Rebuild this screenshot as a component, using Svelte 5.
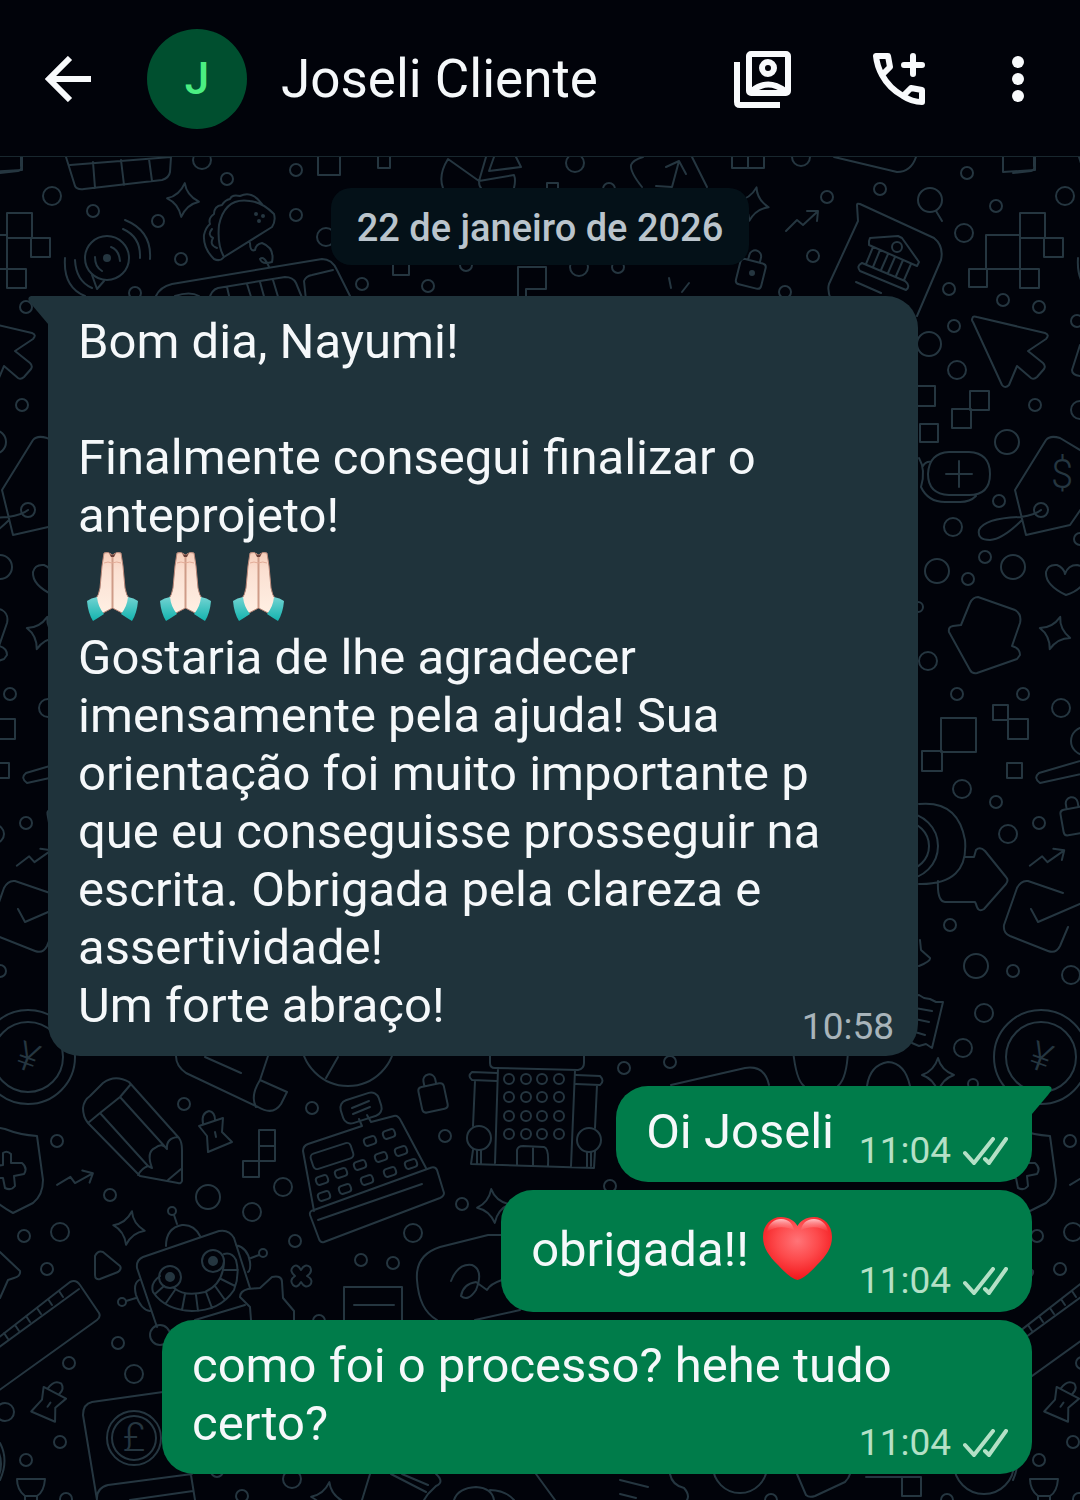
<script lang="ts">
  type Part = { text?: string; emoji?: 'pray' | 'heart' };
  interface Message {
    id: number;
    sent: boolean;
    tail: boolean;
    time: string;
    lines: Part[][];
  }

  const contact = 'Joseli Cliente';
  const day = '22 de janeiro de 2026';

  const messages: Message[] = [
    {
      id: 1,
      sent: false,
      tail: true,
      time: '10:58',
      lines: [
        [{ text: 'Bom dia, Nayumi!' }],
        [],
        [{ text: 'Finalmente consegui finalizar o anteprojeto!' }],
        [{ emoji: 'pray' }, { emoji: 'pray' }, { emoji: 'pray' }],
        [
          {
            text: 'Gostaria de lhe agradecer imensamente pela ajuda! Sua orientação foi muito importante p que eu conseguisse prosseguir na escrita. Obrigada pela clareza e assertividade!'
          }
        ],
        [{ text: 'Um forte abraço!' }]
      ]
    },
    { id: 2, sent: true, tail: true, time: '11:04', lines: [[{ text: 'Oi Joseli' }]] },
    { id: 3, sent: true, tail: false, time: '11:04', lines: [[{ text: 'obrigada!! ' }, { emoji: 'heart' }]] },
    { id: 4, sent: true, tail: false, time: '11:04', lines: [[{ text: 'como foi o processo? hehe tudo certo?' }]] }
  ];

  // wallpaper: x, y, r
  const rings = [
    [52, 196, 9], [93, 211, 6], [158, 221, 6], [227, 179, 6], [202, 160, 9], [296, 170, 6], [296, 215, 6],
    [181, 259, 6], [135, 293, 6], [326, 237, 9], [362, 284, 6], [428, 286, 6], [466, 265, 6], [579, 267, 9],
    [618, 267, 6], [575, 163, 9], [609, 189, 6], [801, 157, 9], [827, 197, 6], [880, 189, 6], [930, 200, 12],
    [967, 173, 6], [996, 206, 6], [964, 233, 9], [813, 256, 6], [949, 289, 6], [785, 292, 6],
    [1003, 300, 6], [897, 247, 5], [1039, 307, 6], [1077, 321, 6], [954, 326, 6], [929, 344, 12], [957, 370, 9],
    [1035, 405, 6], [1007, 442, 12], [1080, 410, 9], [999, 501, 6], [953, 527, 9], [985, 557, 6], [937, 571, 12],
    [1013, 567, 12], [968, 579, 6], [1080, 539, 6], [918, 607, 5], [928, 661, 9], [957, 694, 6], [1023, 694, 6],
    [1041, 510, 7], [1061, 708, 9], [962, 789, 9], [996, 802, 6], [1008, 834, 9], [1039, 823, 6], [950, 925, 6],
    [976, 966, 12], [1013, 971, 6], [1071, 975, 9], [984, 1013, 9], [963, 1048, 9], [973, 1084, 5],
    [1041, 1057, 47], [1041, 1057, 35], [905, 846, 33], [905, 846, 24], [1085, 741, 14],
    [184, 1104, 6], [57, 1141, 6], [110, 1195, 6], [60, 1232, 9], [24, 1236, 6], [47, 1269, 6], [208, 1197, 12],
    [252, 1212, 9], [283, 1187, 9], [312, 1108, 6], [295, 1241, 6], [118, 1343, 6], [69, 1363, 6], [134, 1374, 9],
    [5, 1412, 9], [60, 1442, 6], [26, 1460, 6], [292, 1479, 9], [242, 1496, 6], [66, 1499, 6], [217, 1471, 6],
    [319, 1321, 6], [348, 1039, 47], [445, 1136, 6], [462, 1204, 6], [413, 1233, 9], [361, 1260, 6], [393, 1263, 6],
    [624, 1068, 6], [610, 1186, 6], [670, 1062, 6], [479, 1138, 12], [589, 1140, 12], [740, 1466, 27],
    [984, 1464, 30], [771, 1500, 6], [947, 1500, 6], [172, 1211, 4], [263, 1253, 4], [122, 1302, 4],
    [170, 1277, 11], [213, 1261, 11], [160, 1335, 10], [134, 1438, 27], [134, 1438, 22], [107, 258, 22]
  ];

  // x, y, width, height
  const boxes = [
    [318, 140, 22, 35], [378, 140, 12, 28], [547, 183, 11, 12], [393, 258, 16, 17], [732, 140, 16, 28],
    [748, 140, 16, 28], [1020, 213, 25, 25], [1044, 238, 19, 19], [986, 235, 34, 34], [969, 269, 18, 18],
    [1020, 269, 19, 19], [915, 386, 20, 20], [920, 424, 18, 18], [970, 391, 19, 19], [952, 409, 19, 19],
    [941, 718, 35, 34], [922, 751, 20, 20], [993, 705, 15, 15], [1008, 719, 20, 20], [1007, 763, 15, 15],
    [259, 1130, 16, 16], [259, 1146, 16, 15], [243, 1161, 16, 16], [902, 1477, 19, 19]
  ];

  // x, y, rotation
  const sparkles = [
    [183, 200, 6], [753, 204, 12], [1055, 633, 18], [938, 1075, 0], [129, 1228, 10], [493, 1206, -6], [327, 1499, 8]
  ];
  const trends = [[802, 221, 0], [1047, 858, 8], [75, 1179, 14]];
  const locks = [[752, 269, 14], [432, 1093, -12], [1074, 816, -10]];
  const pins = [[215, 1134, 0], [49, 1404, 46]];
  const keys = [
    [370, 1141], [389, 1134], [322, 1180], [341, 1173], [360, 1165], [381, 1157], [401, 1151],
    [324, 1196], [345, 1189], [367, 1180], [390, 1172], [411, 1164]
  ];
  const dots = [[107, 258, 3], [256, 214, 1], [263, 216, 1], [259, 221, 1], [170, 1277, 4], [213, 1261, 4], [752, 273, 2]];
  const windowCols = [509, 526, 542, 559];
  const windowRows = [1079, 1097, 1116, 1134];

  const doodles = [
    // top row, cut by the header
    'M0 173L18 171Q22 170 21 166V150M66 157L75 186Q77 190 84 189L162 180Q169 178 170 172L171 157M70 165L171 157M93 162L95 188M121 160L124 185M149 159L152 181',
    'M443 188Q438 175 448 159L479 181L486 157M479 181Q479 186 481 188M479 181L514 175Q516 180 514 188M521 167L489 171L494 157M521 167L516 157',
    'M642 187Q630 172 631 165Q633 160 643 157M692 157L707 187M656 186L672 187L679 161M666 167L679 161L686 174',
    'M834 157L897 172Q911 172 916 157M1003 157V172L1035 170V157M936 211L942 221',
    // voice bubble
    'M92 275L97 289L104 281M111 247Q119 250 120 261M95 257Q95 267 102 271M123 229Q141 237 140 258M125 220Q152 231 150 259M75 260Q76 281 92 288M65 258Q63 287 85 296',
    // taco
    'M224 257L272 227Q276 221 274 214Q262 202 250 201Q225 197 219 225Q217 245 224 257ZM224 257Q220 262 214 259Q203 248 204 235Q206 227 210 224Q208 218 214 214Q214 206 222 205Q225 200 230 199Q232 194 240 196Q252 190 262 204M212 229Q207 235 213 238Q209 245 217 248M250 243Q250 252 255 250Q256 244 262 243Q275 248 272 262Q262 265 260 259Q264 255 269 267',
    // bus
    'M156 296Q160 287 172 284L322 259Q332 259 337 270L352 300M209 300Q211 290 218 288L285 277Q293 277 296 283L303 300M227 287L230 300M247 284L252 300M260 282L265 300M273 280L279 300M306 300L304 281Q306 276 312 275L333 270M175 296Q190 291 199 296',
    'M518 300V267H546V289H526V300M669 278L671 288M689 283L682 292',
    // bank note bubble
    'M831 300Q827 290 829 284L858 221L857 205Q857 203 860 204L934 238Q944 246 941 260L917 316M869 241L870 238L898 236L902 238L919 262L917 266L869 245ZM862 263L905 281Q911 286 906 290L860 271Q856 266 862 263M873 247L866 264M880 250L873 267M888 254L881 270M895 257L888 273M903 260L896 276M911 264L904 280M856 282L881 293',
    // pointer
    'M973 317Q971 320 973 322L1002 385Q1005 389 1009 385L1017 366L1031 378Q1034 380 1037 377L1044 369Q1046 366 1043 363L1028 351L1046 339Q1050 335 1045 333L977 317Q974 316 973 317M1080 345L1072 370Q1072 375 1080 376',
    // coins
    'M949 452H969Q990 453 990 474Q990 495 969 495H949Q928 494 928 474Q929 453 949 452M959 461V487M946 474H972M921 487Q928 502 945 502H960Q970 502 976 496M919 458Q926 470 921 487M923 466Q926 461 931 462',
    // price tag
    'M1015 490L1046 440Q1050 435 1060 438L1095 459L1094 490L1070 525L1026 535ZM1041 510Q1035 515 1021 517Q985 518 979 530Q977 540 990 540Q1003 539 1022 520',
    'M1066 595Q1045 585 1046 572Q1048 564 1057 565Q1064 568 1065 574Q1068 565 1077 565Q1088 567 1086 578Q1082 590 1066 595',
    'M978 597L1015 610Q1022 614 1020 623L1012 646Q1020 648 1020 655L1017 659L977 673Q972 674 970 670L949 632Q948 627 953 626L961 625L970 603Q973 597 978 597Z',
    // brush, camera, arrow
    'M1090 758L1039 773Q1033 778 1040 783L1090 772M919 804Q958 800 965 840Q969 885 919 884M965 857H974L976 850Q980 846 985 851L1006 877Q1009 880 1006 884L984 909Q978 913 976 904L975 902H945Q937 901 938 881',
    'M1063 893L1028 881Q1021 880 1017 888L1004 925Q1003 933 1010 936L1048 951Q1056 954 1060 946L1068 927M1031 909L1038 922L1082 903',
    'M920 940L921 950L930 958Q931 961 919 966M914 996L919 995L924 998L930 999L936 1002L943 1002L932 1048L926 1044L919 1046L912 1043M915 1008L932 1011M915 1019L929 1022M915 1032L925 1035',
    // shield
    'M0 1128L5 1129Q20 1135 37 1136L43 1180Q43 1195 33 1203L13 1213Q0 1206 -8 1198M3 1153Q7 1150 11 1154V1163L22 1163Q28 1168 24 1174L14 1176L15 1186Q11 1191 5 1188L3 1178L-6 1178Q-10 1172-5 1166L3 1165Z',
    // pencil
    'M83 1108Q84 1100 90 1096L103 1083Q115 1074 129 1082L179 1138Q182 1142 182 1150V1181Q181 1184 178 1183L140 1176L88 1123Q83 1117 83 1108M88 1123L100 1113L120 1097L131 1084M100 1113L148 1166Q142 1168 138 1175M120 1097L167 1149M148 1166L152 1168Q146 1152 155 1148Q162 1142 167 1149Q166 1138 178 1137M168 1180L181 1169',
    // scroll
    'M176 1056Q176 1066 186 1073L258 1107Q273 1116 281 1104L287 1092L260 1080L268 1056M260 1080Q250 1096 256 1107M205 1057L241 1073M338 1057L326 1078',
    // robot
    'M157 1327L137 1268Q136 1260 143 1257L219 1231Q229 1229 234 1238L250 1288M195 1320L245 1305M166 1246Q166 1228 182 1225Q194 1224 200 1236M177 1224L174 1215M236 1245Q248 1248 250 1262Q251 1270 248 1272M251 1258L259 1255M139 1280Q133 1284 136 1295Q141 1310 150 1311M136 1298L126 1301',
    'M160 1276Q150 1283 153 1292Q165 1310 192 1311Q220 1311 234 1290Q240 1275 236 1260Q232 1252 224 1254M174 1288Q185 1297 205 1292Q223 1284 224 1262M164 1286L155 1294M175 1290L166 1303M185 1294L182 1310M196 1295L198 1311M206 1292L212 1308M215 1286L225 1300M221 1279L235 1286M223 1270L238 1270',
    'M251 1320L250 1307L240 1297Q240 1291 248 1289L260 1288L272 1277Q282 1275 282 1282L283 1298L294 1311V1320M95 1256Q98 1250 103 1252L120 1266Q122 1269 118 1272L100 1279Q95 1280 95 1275Z',
    'M301 1270Q305 1263 310 1267Q313 1272 307 1276Q314 1280 310 1285Q305 1289 301 1282Q297 1289 293 1285Q289 1280 295 1276Q289 1271 293 1267Q297 1263 301 1270Z',
    // ruler
    'M-20 1352L70 1282Q76 1279 80 1285L99 1313Q101 1317 97 1320L-20 1404M-20 1361L79 1289M-7 1342l4 6M4 1333l4 6M15 1325l4 6M26 1316l4 6M37 1308l4 6M48 1299l4 6M59 1291l4 6M0 1252L20 1271Q21 1276 14 1278L8 1280L0 1298',
    // wallet, funnel
    'M170 1391L92 1402Q83 1404 83 1415L97 1500Q96 1488 108 1485L192 1474M130 1500L193 1491M191 1475L195 1500M17 1479H45Q44 1492 37 1496H25Q17 1490 17 1479M25 1496V1503M37 1496V1503M0 1443Q9 1460 0 1480',
    // cash register
    'M314 1211L303 1151Q303 1146 308 1144L362 1126L359 1119M367 1115L371 1122L394 1116Q398 1115 401 1121L426 1168M352 1108L369 1101M353 1114L370 1107M310 1215Q309 1211 314 1210L430 1168Q435 1166 437 1170L444 1193Q444 1196 440 1198L324 1242Q320 1243 319 1239ZM318 1220L422 1184',
    'M344 1320V1287H402V1320M354 1305H394M510 1235L488 1235L440 1247Q415 1255 417 1280Q419 1310 437 1320M475 1320L520 1310M451 1281Q458 1263 472 1265Q484 1270 476 1290Q468 1302 461 1296Q463 1284 476 1282L487 1290Q490 1284 502 1280',
    // building
    'M490 1050V1063Q490 1068 495 1068L578 1070Q584 1069 584 1063V1050M498 1068L495 1163M575 1070L571 1166M497 1073L472 1072Q467 1076 472 1080L497 1081M576 1075L600 1076Q605 1081 600 1085L576 1084M475 1081L473 1126M473 1150L471 1164L594 1168L595 1151M597 1085L595 1128M477 1150V1163M481 1150V1163M587 1152V1166M591 1152V1166M517 1164V1150Q518 1146 523 1146L544 1147Q549 1148 548 1165M533 1147V1165',
    'M671 1085L745 1068Q765 1065 769 1085M793 1050Q796 1080 804 1086M848 1050Q847 1078 838 1086M867 1086Q870 1065 888 1062Q905 1063 910 1086',
    // bottom row
    'M370 1474L362 1500M391 1474L426 1492M402 1474L428 1485M436 1474Q445 1482 436 1486L428 1494L424 1500M454 1500Q458 1488 476 1487Q492 1488 494 1500M490 1490Q505 1490 514 1500M536 1474L555 1500M620 1480L648 1487M620 1494L636 1498M670 1474Q672 1485 684 1488Q690 1495 687 1500M797 1474L806 1495Q809 1498 815 1496L845 1482Q849 1478 850 1474M866 1477H902'
  ];
</script>

{#snippet emojiArt(name: string)}
  {#if name === 'pray'}
    <svg class="emoji" viewBox="0 0 73 84" role="img" aria-label="mãos juntas">
      <defs>
        <linearGradient id="skin" x1="0" x2="0" y1="0" y2="1">
          <stop offset="0" stop-color="#f6cdb9" />
          <stop offset="0.3" stop-color="#fbe0d2" />
          <stop offset="1" stop-color="#fff0e4" />
        </linearGradient>
        <linearGradient id="cuff" x1="0" x2="0" y1="0" y2="1">
          <stop offset="0" stop-color="#72d3d2" />
          <stop offset="1" stop-color="#12b3ae" />
        </linearGradient>
      </defs>
      <path d="M26 8Q30 6 34.5 10Q39 6 43 8L45 21L47 43Q48 50 52 55L46 69L34.5 63L23 69L17 55Q21 50 22 43L24 21Z" fill="url(#skin)" stroke="#b98778" stroke-width="1" />
      <path d="M34.5 10V63" stroke="#cf9c88" stroke-width="2" />
      <path d="M26 18Q30 16 34 18Q39 16 43 18" fill="none" stroke="#e3ac98" stroke-width="1" />
      <path d="M31 8Q34 12 38 8L36 12H33Z" fill="#6b4038" />
      <path d="M9 56Q13 53 19 52Q20 62 26 69Q20 73 15 76Q10 68 9 56ZM60 56Q56 53 50 52Q49 62 43 69Q49 73 54 76Q59 68 60 56Z" fill="url(#cuff)" />
    </svg>
  {:else}
    <svg class="emoji" viewBox="0 0 73 84" role="img" aria-label="coração vermelho">
      <defs>
        <radialGradient id="love" cx="0.5" cy="0.38" r="0.6">
          <stop offset="0" stop-color="#ff7478" />
          <stop offset="0.5" stop-color="#fd4a4c" />
          <stop offset="1" stop-color="#f3191d" />
        </radialGradient>
        <linearGradient id="shine" x1="0" x2="0" y1="0" y2="1">
          <stop offset="0" stop-color="#ffc3c6" />
          <stop offset="1" stop-color="#ff7478" stop-opacity="0" />
        </linearGradient>
      </defs>
      <path d="M36.5 73C32 72 25 67 17 58C8 49 2 41 2 30C2 18 10 10 20 10C28 10 34 14 36.5 19C39 14 45 10 53 10C63 10 71 18 71 30C71 41 65 49 56 58C48 67 41 72 36.5 73Z" fill="url(#love)" />
      <path d="M6 25C7 16 14 12 20 12C28 12 32 17 33 23C25 19 13 19 6 25ZM67 25C66 16 59 12 53 12C45 12 41 17 40 23C48 19 60 19 67 25Z" fill="url(#shine)" />
    </svg>
  {/if}
{/snippet}

<div class="screen">
  <svg class="wallpaper" viewBox="0 0 1080 1500" preserveAspectRatio="xMidYMin slice" aria-hidden="true">
    {#each [-1013, 0, 1013] as shift (shift)}
      <g transform="translate({shift} 0)">
        {#each rings as [x, y, r]}
          <circle cx={x} cy={y} {r} />
        {/each}
        {#each boxes as [x, y, w, h]}
          <rect {x} {y} width={w} height={h} />
        {/each}
        {#each doodles as d}
          <path {d} />
        {/each}
        {#each sparkles as [x, y, a]}
          <path transform="translate({x} {y}) rotate({a})" d="M0-17Q3-5 16 0Q4 4 0 17Q-4 4-16 0Q-4-4 0-17Z" />
        {/each}
        {#each trends as [x, y, a]}
          <path transform="translate({x} {y}) rotate({a})" d="M-16 10L-5-1L1 4L15-9M5-10H16L15 0" />
        {/each}
        {#each locks as [x, y, a]}
          <path
            transform="translate({x} {y}) rotate({a})"
            d="M-9-8H9Q13-8 13-4V14Q13 18 9 18H-9Q-13 18-13 14V-4Q-13-8-9-8ZM-6-8V-13A6 6 0 0 1 6-13V-8"
          />
        {/each}
        {#each pins as [x, y, a]}
          <path
            transform="translate({x} {y}) rotate({a})"
            d="M-16-8L8-16L7-2L17 8L-7 18L-8 2ZM-12-10Q-14-21-6-23Q0-22 0-14M0-2L1 3"
          />
        {/each}
        {#each keys as [x, y]}
          <rect transform="translate({x} {y}) rotate(-18)" x="-6" y="-4" width="12" height="8" rx="3" />
        {/each}
        <rect transform="translate(361 1108) rotate(-18)" x="-20" y="-12" width="40" height="24" rx="8" />
        <rect transform="translate(332 1156) rotate(-18)" x="-21" y="-8" width="42" height="16" rx="4" />
        {#each windowRows as y}
          {#each windowCols as x}
            <circle cx={x} cy={y} r="5" />
          {/each}
        {/each}
        {#each dots as [x, y, r]}
          <circle class="dot" cx={x} cy={y} {r} />
        {/each}
      </g>
    {/each}
    <text x="1062" y="488">$</text>
    <text x="134" y="1451">£</text>
    <text transform="translate(28 1057) rotate(20)" x="0" y="14">¥</text>
    <text transform="translate(1041 1057) rotate(20)" x="0" y="14">¥</text>
  </svg>

  <header class="topbar">
    <button class="icon-btn" aria-label="Voltar">
      <svg width="46" height="46" viewBox="0 0 46 46" fill="none" stroke="currentColor" stroke-width="6">
        <path d="M25 2L4 23L25 44M4 23H46" />
      </svg>
    </button>
    <div class="avatar">J</div>
    <h1>{contact}</h1>
    <nav class="actions">
      <button class="icon-btn" aria-label="Contato">
        <svg width="58" height="58" viewBox="0 0 58 58" fill="none" stroke="currentColor" stroke-width="6">
          <rect x="15" y="4" width="39" height="39" rx="2" />
          <path d="M3 12V52Q3 55 6 55H46" />
          <circle cx="34" cy="18" r="6" />
          <path d="M18 41Q34 28 51 41" />
        </svg>
      </button>
      <button class="icon-btn" aria-label="Ligar">
        <svg width="52" height="52" viewBox="0 0 52 52" fill="none" stroke="currentColor" stroke-width="6" stroke-linejoin="round">
          <path d="M3 3H15L17 14L9 22Q4 13 3 3ZM30 43L38 35L49 37V49Q39 49 30 43ZM9 22Q16 35 30 43" />
          <path d="M40 3V21M31 12H49" stroke-linecap="round" />
        </svg>
      </button>
      <button class="icon-btn" aria-label="Mais opções">
        <svg width="24" height="46" viewBox="0 0 24 46" fill="currentColor">
          <circle cx="12" cy="6" r="6" />
          <circle cx="12" cy="23" r="6" />
          <circle cx="12" cy="40" r="6" />
        </svg>
      </button>
    </nav>
  </header>

  <main class="chat">
    <div class="day">{day}</div>
    {#each messages as msg (msg.id)}
      <article class="bubble" class:sent={msg.sent} class:tailed={msg.tail}>
        {#if msg.tail}
          <svg class="tail" viewBox="0 0 20 28" aria-hidden="true">
            <path d="M0 0H17Q21 1 19 5L16 9L0 28Z" />
          </svg>
        {/if}
        <div class="body">
          {#each msg.lines as line, i}
            <p>
              {#each line as part}{#if part.emoji}{@render emojiArt(part.emoji)}{:else}{part.text}{/if}{/each}{#if i === msg.lines.length - 1}<span class="spacer"></span>{/if}
            </p>
          {/each}
        </div>
        <div class="meta">
          <time>{msg.time}</time>
          {#if msg.sent}
            <svg class="ticks" viewBox="0 0 45 28" role="img" aria-label="Entregue">
              <path d="M2 16L11 26L30 2M22 22L26 26L43 2" />
            </svg>
          {/if}
        </div>
      </article>
    {/each}
  </main>
</div>

<style>
  :global(body) {
    background: #01030a;
  }
  .screen {
    position: relative;
    min-height: 100vh;
    overflow: hidden;
    background: #01030a;
    color: #f5f8fa;
    font-family: Roboto, 'Liberation Sans', sans-serif;
  }
  .wallpaper {
    position: absolute;
    inset: 0;
    width: 100%;
    height: 100%;
    fill: none;
    stroke: #253640;
    stroke-width: 2;
    stroke-linecap: round;
    stroke-linejoin: round;
  }
  .wallpaper text {
    fill: #253640;
    stroke: none;
    font-size: 40px;
    font-weight: 300;
    text-anchor: middle;
  }
  .wallpaper .dot {
    fill: #253640;
  }
  .topbar {
    position: relative;
    display: flex;
    align-items: center;
    height: 154px;
    padding: 2px 50px 0 45px;
    background: #01030a;
    border-bottom: 1px solid #18272e;
  }
  .icon-btn {
    display: flex;
    padding: 0;
    border: 0;
    background: none;
    color: #f8fafc;
    cursor: pointer;
  }
  .avatar {
    display: flex;
    align-items: center;
    justify-content: center;
    width: 100px;
    height: 100px;
    margin: 0 34px 0 56px;
    border-radius: 50%;
    background: #004f2f;
    color: #4bee82;
    font-size: 44px;
    font-weight: 500;
  }
  h1 {
    flex: 1;
    margin: 0;
    font-size: 53px;
    font-weight: 400;
    white-space: nowrap;
  }
  .actions {
    display: flex;
    align-items: center;
    gap: 81px;
  }
  .chat {
    position: relative;
    display: flex;
    flex-direction: column;
    align-items: flex-start;
    gap: 8px;
    padding: 31px 48px 26px;
  }
  .day {
    align-self: center;
    padding: 19px 26px 16px;
    margin-bottom: 23px;
    border-radius: 20px;
    background: #041118;
    color: #bac4cc;
    font-size: 38px;
    font-weight: 500;
    line-height: 42px;
  }
  .bubble {
    --fill: #1f333b;
    position: relative;
    display: grid;
    max-width: calc(100% - 114px);
    box-sizing: border-box;
    padding: 0 24px 0 30px;
    border-radius: 32px;
    background: var(--fill);
  }
  .bubble.sent {
    --fill: #007c4a;
    align-self: flex-end;
  }
  .bubble.tailed {
    border-top-left-radius: 0;
  }
  .bubble.sent.tailed {
    margin-top: 22px;
    border-top-left-radius: 32px;
    border-top-right-radius: 0;
  }
  .tail {
    position: absolute;
    top: 0;
    right: 100%;
    width: 20px;
    height: 28px;
    fill: var(--fill);
    transform: scaleX(-1);
  }
  .sent .tail {
    right: auto;
    left: 100%;
    transform: none;
  }
  .body,
  .meta {
    grid-area: 1 / 1;
  }
  .body {
    padding: 17px 0 21px;
    font-size: 49px;
    line-height: 58px;
  }
  p {
    min-height: 58px;
    margin: 0;
  }
  .emoji {
    width: 73px;
    height: 84px;
    vertical-align: -25px;
  }
  /* keeps the last line clear of the time */
  .spacer {
    display: inline-block;
    width: 120px;
  }
  .sent .spacer {
    width: 174px;
  }
  .meta {
    display: flex;
    align-items: center;
    align-self: end;
    justify-self: end;
    gap: 12px;
    margin-bottom: 8px;
    color: #a8b4ba;
    font-size: 37px;
    line-height: 42px;
  }
  .sent .meta {
    margin-bottom: 10px;
    color: #b4e0c6;
  }
  .ticks {
    width: 45px;
    height: 28px;
    fill: none;
    stroke: currentColor;
    stroke-width: 4;
    stroke-linecap: round;
  }
</style>
